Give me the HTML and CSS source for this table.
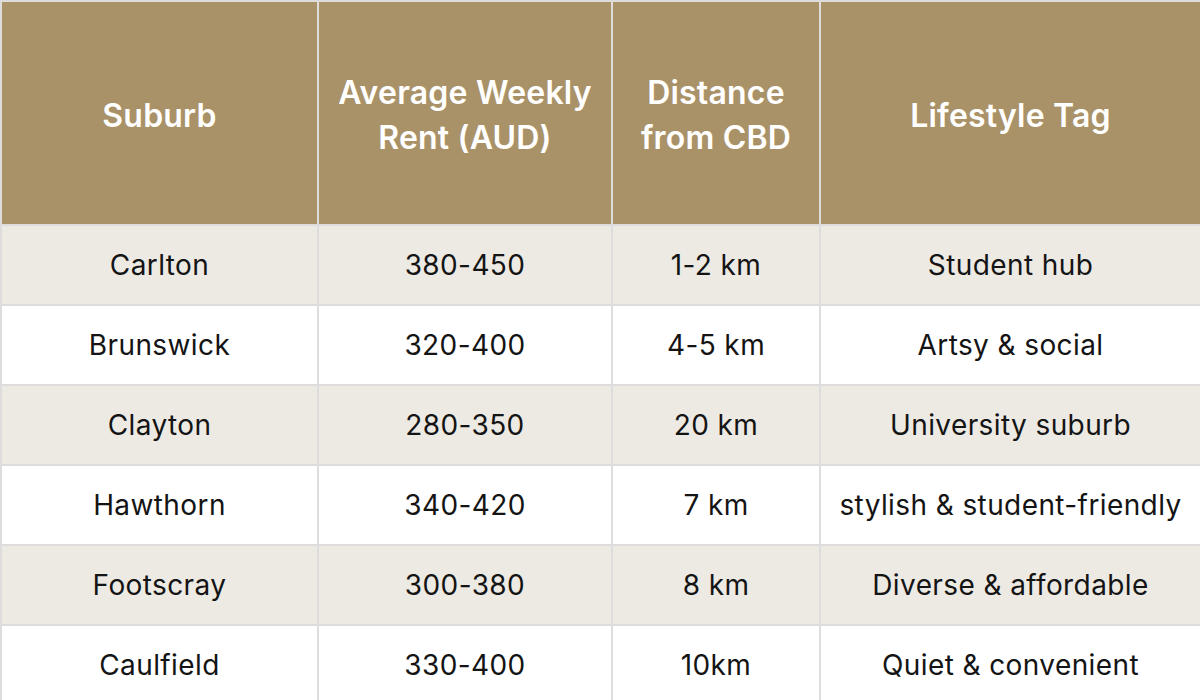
FILE: index.html
```html
<!DOCTYPE html>
<html lang="en">
<head>
<meta charset="utf-8">
<title>Suburbs</title>
<link rel="stylesheet" href="styles.css">
</head>
<body>
<table class="rent-table">
  <colgroup>
    <col class="c1"><col class="c2"><col class="c3"><col class="c4">
  </colgroup>
  <thead>
    <tr>
      <th>Suburb</th>
      <th>Average Weekly<br>Rent (AUD)</th>
      <th>Distance<br>from CBD</th>
      <th>Lifestyle Tag</th>
    </tr>
  </thead>
  <tbody>
    <tr class="alt"><td>Carlton</td><td>380-450</td><td>1-2 km</td><td>Student hub</td></tr>
    <tr><td>Brunswick</td><td>320-400</td><td>4-5 km</td><td>Artsy &amp; social</td></tr>
    <tr class="alt"><td>Clayton</td><td>280-350</td><td>20 km</td><td>University suburb</td></tr>
    <tr><td>Hawthorn</td><td>340-420</td><td>7 km</td><td>stylish &amp; student-friendly</td></tr>
    <tr class="alt"><td>Footscray</td><td>300-380</td><td>8 km</td><td>Diverse &amp; affordable</td></tr>
    <tr><td>Caulfield</td><td>330-400</td><td>10km</td><td>Quiet &amp; convenient</td></tr>
  </tbody>
</table>
</body>
</html>
```

FILE: styles.css
```css
html, body {
  margin: 0;
  padding: 0;
  background: #ffffff;
  overflow: hidden;
}
.rent-table {
  width: 1200px;
  table-layout: fixed;
  border-collapse: collapse;
  font-family: Inter, "Noto Sans", sans-serif;
  color: #141414;
}
.c1 { width: 317px; }
.c2 { width: 294px; }
.c3 { width: 208px; }
.c4 { width: 381px; }
.rent-table th,
.rent-table td {
  border: 2px solid #dedcdc;
  text-align: center;
  vertical-align: middle;
  padding: 0;
}
.rent-table th {
  background: #aa9268;
  color: #ffffff;
  font-size: 32px;
  font-weight: 600;
  line-height: 45px;
  height: 218px;
  padding-top: 4px;
  letter-spacing: 0.2px;
}
.rent-table td {
  height: 78px;
  font-size: 28px;
  font-weight: 400;
  line-height: 30px;
  letter-spacing: 0.4px;
}
.rent-table tr.alt td {
  background: #edeae4;
}
```
